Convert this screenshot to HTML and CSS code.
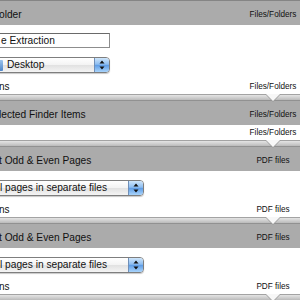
FILE: index.html
```html
<!DOCTYPE html>
<html>
<head>
<meta charset="utf-8">
<link rel="stylesheet" href="styles.css">
</head>
<body>
<div class="workflow">
  <section class="action">
    <div class="act-head"><span class="title">older</span><span class="type">Files/Folders</span></div>
    <div class="act-body body-first">
      <div class="field">e Extraction</div>
      <div class="popup popup-folder">
        <span class="folder"></span>
        <span class="ptext">Desktop</span>
        <span class="stepper"><svg width="6" height="10" viewBox="0 0 6 10"><path d="M3 0.5 L5.5 3.5 H0.5 Z M3 9.5 L5.5 6.5 H0.5 Z" fill="#111"/></svg></span>
      </div>
      <div class="act-foot"><span class="opt">ns</span><span class="type">Files/Folders</span></div>
    </div>
    <div class="connector"><span class="notch"></span></div>
  </section>

  <section class="action">
    <div class="act-head"><span class="title">lected Finder Items</span><span class="type">Files/Folders</span></div>
    <div class="act-body body-short">
      <div class="act-foot foot-short"><span class="opt"></span><span class="type">Files/Folders</span></div>
    </div>
    <div class="connector"><span class="notch"></span></div>
  </section>

  <section class="action">
    <div class="act-head"><span class="title">t Odd &amp; Even Pages</span><span class="type">PDF files</span></div>
    <div class="act-body body-popup">
      <div class="popup popup-wide">
        <span class="ptext">l pages in separate files</span>
        <span class="stepper"><svg width="6" height="10" viewBox="0 0 6 10"><path d="M3 0.5 L5.5 3.5 H0.5 Z M3 9.5 L5.5 6.5 H0.5 Z" fill="#111"/></svg></span>
      </div>
      <div class="act-foot"><span class="opt">ns</span><span class="type">PDF files</span></div>
    </div>
    <div class="connector"><span class="notch"></span></div>
  </section>

  <section class="action">
    <div class="act-head"><span class="title">t Odd &amp; Even Pages</span><span class="type">PDF files</span></div>
    <div class="act-body body-popup">
      <div class="popup popup-wide">
        <span class="ptext">l pages in separate files</span>
        <span class="stepper"><svg width="6" height="10" viewBox="0 0 6 10"><path d="M3 0.5 L5.5 3.5 H0.5 Z M3 9.5 L5.5 6.5 H0.5 Z" fill="#111"/></svg></span>
      </div>
      <div class="act-foot"><span class="opt">ns</span><span class="type">PDF files</span></div>
    </div>
    <div class="connector"><span class="notch"></span></div>
  </section>
</div>
</body>
</html>
```

FILE: styles.css
```css
html, body {
  margin: 0;
  padding: 0;
  width: 300px;
  height: 300px;
  overflow: hidden;
  background: #ffffff;
}

body {
  font-family: "Liberation Sans", Arial, sans-serif;
  font-size: 10px;
  color: #111111;
}

.workflow {
  display: flex;
  flex-direction: column;
  border-top: 1px solid #858585;
}

.action {
  display: flex;
  flex-direction: column;
}

.act-head {
  display: flex;
  align-items: center;
  height: 24px;
  box-sizing: border-box;
  padding-top: 3px;
  background: #ababab;
}

.title {
  flex: 1;
  white-space: nowrap;
  overflow: hidden;
  font-size: 10.2px;
  margin-left: -1px;
}

.type {
  width: 54px;
  flex: none;
  text-align: center;
  white-space: nowrap;
  font-size: 8.2px;
}

.act-body {
  display: flex;
  flex-direction: column;
  background: #ffffff;
  box-sizing: border-box;
}

.body-first {
  height: 69px;
  padding-top: 8px;
}

.body-short {
  height: 15px;
}

.body-popup {
  height: 46px;
  padding-top: 9px;
}

.field {
  width: 120px;
  height: 15px;
  margin-left: -10px;
  padding-left: 10px;
  box-sizing: border-box;
  border: 1px solid #8d8d8d;
  border-top-color: #6a6a6a;
  line-height: 13px;
  white-space: nowrap;
  font-size: 10.2px;
}

.popup {
  display: flex;
  align-items: center;
  height: 16px;
  box-sizing: border-box;
  border: 1px solid #7e7e7e;
  border-radius: 4px;
  background: linear-gradient(#ffffff, #f3f3f3 50%, #e1e1e1 51%, #f4f4f4);
  box-shadow: 0 1px 1px rgba(0, 0, 0, 0.22);
  overflow: hidden;
  font-size: 10.2px;
}

.popup-folder {
  width: 124px;
  margin-top: 9px;
  margin-left: -14px;
}

.popup-wide {
  width: 164px;
  margin-left: -20px;
  padding-left: 19px;
}

.folder {
  width: 14px;
  height: 11px;
  margin-left: 2px;
  margin-right: 4px;
  flex: none;
  border-radius: 1px;
  background: linear-gradient(#9cc4ec, #4f86c8);
}

.ptext {
  flex: 1;
  white-space: nowrap;
  line-height: 14px;
}

.stepper {
  width: 14px;
  height: 100%;
  flex: none;
  display: flex;
  align-items: center;
  justify-content: center;
  border-left: 1px solid #6f8fb8;
  background: linear-gradient(#cfe6fb, #8dbdf0 45%, #5f9de6 52%, #a9d4fb);
}

.act-foot {
  display: flex;
  height: 15px;
  line-height: 15px;
  margin-top: 6px;
}

.foot-short {
  margin-top: 0;
}

.opt {
  flex: 1;
  white-space: nowrap;
  margin-left: -1px;
}

.connector {
  position: relative;
  height: 7px;
  box-sizing: border-box;
  border-top: 1px solid #a3a3a3;
  border-bottom: 1px solid #919191;
  background: linear-gradient(#e4e4e4, #d0d0d0 50%, #bababa);
}

.notch {
  position: absolute;
  left: 265px;
  top: -1px;
  width: 16px;
  height: 8px;
  background: #9c9c9c;
  clip-path: polygon(0 0, 100% 0, 50% 100%);
}

.notch::after {
  content: "";
  position: absolute;
  left: 1px;
  top: 0;
  width: 14px;
  height: 7px;
  background: #f7f7f7;
  clip-path: polygon(0 0, 100% 0, 50% 100%);
}
```
